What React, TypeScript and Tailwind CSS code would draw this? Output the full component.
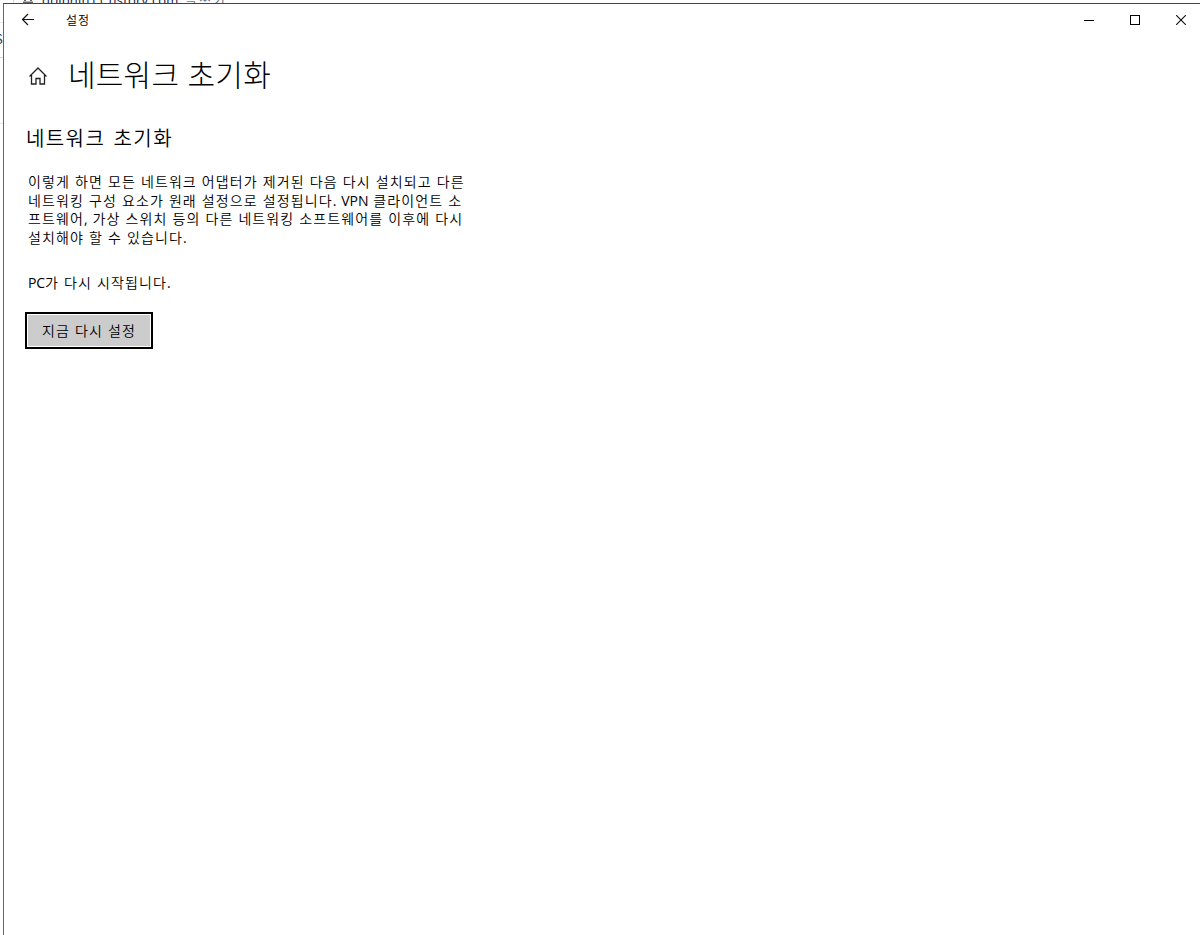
import React from "react";

const lines = [
  "이렇게 하면 모든 네트워크 어댑터가 제거된 다음 다시 설치되고 다른",
  "네트워킹 구성 요소가 원래 설정으로 설정됩니다. VPN 클라이언트 소",
  "프트웨어, 가상 스위치 등의 다른 네트워킹 소프트웨어를 이후에 다시",
  "설치해야 할 수 있습니다.",
];

// Latin letters and punctuation are set tighter than the Hangul
const MixedText: React.FC<{ text: string }> = ({ text }) => (
  <>
    {text.split(/([A-Za-z.,]+)/).map((part, i) =>
      i % 2 ? (
        <span
          key={i}
          className="font-['Open_Sans',sans-serif] font-normal leading-none tracking-[-0.1px]"
        >
          {part}
        </span>
      ) : (
        part
      )
    )}
  </>
);

const BrowserBehind: React.FC = () => (
  <div className="absolute inset-0 overflow-hidden bg-white">
    {/* Address bar */}
    <div className="absolute left-[13px] top-0 h-[3px] w-px bg-gray-300" />
    <svg className="absolute left-[22px] top-0" width="12" height="4">
      <path d="M3 0V1M9 0V1M1 2.5H11" stroke="#62666b" strokeWidth="2" />
    </svg>
    <div className="absolute -top-[8px] left-[42px] flex whitespace-nowrap font-['Open_Sans','Noto_Sans_CJK_KR',sans-serif] text-[13px] leading-4">
      <span className="w-[143px] tracking-[0.2px] text-[#15153a]">
        dolphin11.tistory.com
      </span>
      <span className="tracking-[2px] text-gray-500">글쓰기</span>
    </div>
    {/* Left edge of the page */}
    <div className="absolute -left-[5px] top-[31px] text-[13px] leading-4 text-[#15336b]">
      S
    </div>
    <div className="absolute left-0 top-[22px] h-px w-[3px] bg-gray-200" />
    <div className="absolute left-0 top-[57px] h-px w-[3px] bg-gray-300" />
    <div className="absolute left-0 top-[123px] h-px w-[3px] bg-gray-200" />
  </div>
);

const TitleBar: React.FC = () => (
  <div className="-mr-1 flex h-8 items-center justify-between">
    <div className="flex items-center">
      <svg
        className="ml-[17px]"
        width="14"
        height="14"
        fill="none"
        stroke="#111"
        strokeWidth="1.2"
      >
        <path d="M13 6.5H1.5M7 1L1.5 6.5L7 12" />
      </svg>
      <span className="-mt-px ml-[31px] text-[12px] font-[350] tracking-[1px]">
        설정
      </span>
    </div>
    <div className="flex h-full">
      <button className="flex w-[46px] items-center justify-center">
        <svg width="10" height="10" shapeRendering="crispEdges">
          <path d="M0 5.5H10" stroke="#000" />
        </svg>
      </button>
      <button className="flex w-[46px] items-center justify-center">
        <svg width="10" height="10" fill="none" shapeRendering="crispEdges">
          <path d="M0.5 0.5H9.5V9.5H0.5Z" stroke="#000" />
        </svg>
      </button>
      <button className="flex w-[46px] items-center justify-center">
        <svg width="10" height="10">
          <path d="M0 0L10 10M10 0L0 10" stroke="#111" strokeWidth="1.1" />
        </svg>
      </button>
    </div>
  </div>
);

const App: React.FC = () => {
  return (
    <div className="relative h-[935px] w-[1200px] overflow-hidden font-['Noto_Sans_CJK_KR',sans-serif] text-black">
      <BrowserBehind />
      <div className="relative h-full pl-[3px] pt-[3px]">
        <div className="h-full border-l border-t border-l-[#666] border-t-[#444] bg-white">
          <TitleBar />

          <header className="mt-[13px] flex h-[48px] items-center">
            <svg
              className="ml-[24px] mt-[6px]"
              width="20"
              height="20"
              fill="none"
              stroke="#222"
              strokeWidth="1.3"
            >
              <path d="M1.5 10.5L10 2L18.5 10.5M3.5 9V18H8V12.5H12V18H16.5V9" />
            </svg>
            <h1 className="ml-[20px] whitespace-nowrap text-[30px] font-light leading-[40px] tracking-[0.2px] [word-spacing:1.5px]">
              네트워크 초기화
            </h1>
          </header>

          <main className="ml-[24px]">
            <h2 className="-ml-[2px] mt-[27px] text-[20px] font-[350] leading-[28px] tracking-[1.4px] [word-spacing:2.5px]">
              네트워크 초기화
            </h2>
            <p className="mt-[20px] whitespace-nowrap text-[14px] font-[350] leading-[18.67px] tracking-[1.1px] [word-spacing:0.8px]">
              {lines.map((line) => (
                <span key={line} className="block">
                  <MixedText text={line} />
                </span>
              ))}
            </p>
            <p className="mt-[26px] text-[14px] font-[350] leading-[19px] tracking-[1.1px] [word-spacing:0.8px]">
              <MixedText text="PC가 다시 시작됩니다." />
            </p>
            <button className="-ml-[3px] mt-[20px] flex h-[37px] w-[128px] items-center justify-center border-2 border-black bg-[#ccc] text-[14px] font-[350] tracking-[1.1px] shadow-[inset_0_0_0_1px_#fff] [word-spacing:0.8px]">
              지금 다시 설정
            </button>
          </main>
        </div>
      </div>
    </div>
  );
};

export default App;
